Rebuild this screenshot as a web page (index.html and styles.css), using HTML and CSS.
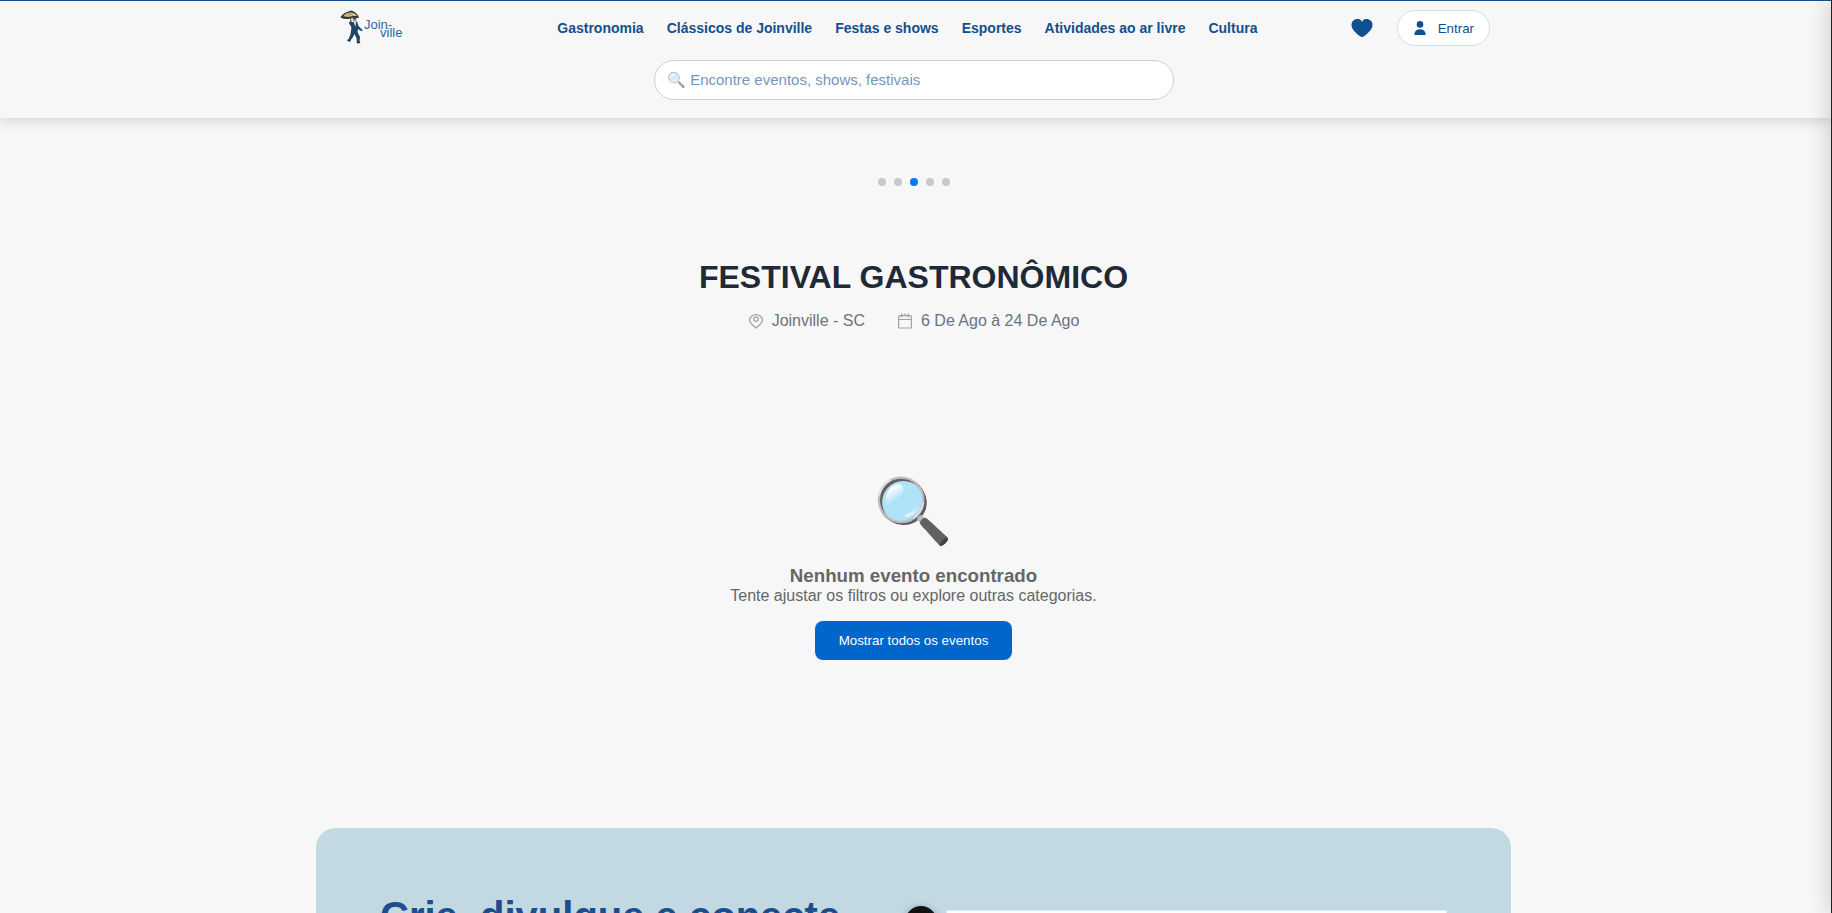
FILE: index.html
```html
<!DOCTYPE html>
<html lang="pt-BR">
<head>
<meta charset="utf-8">
<meta name="viewport" content="width=device-width, initial-scale=1">
<title>Joinville</title>
<link rel="stylesheet" href="styles.css">
</head>
<body>
<header class="header">
  <div class="header-row">
    <a class="logo" href="#" aria-label="Joinville">
      <svg class="logo-art" viewBox="0 0 66 36" aria-hidden="true">
        <path d="M2.500 7.500Q4 4 9 2L13 .5L16 1.800Q20 4 21 8L16 7.500 10 9Q5 9 2.500 7.500Z" fill="#26313a"/>
        <path d="M5 6.300Q8 3 12 2.300Q17 3 19 6L15 6 11 7Z" fill="#e5c783"/>
        <path d="M12 2.500L11 7M12 2.500L15 6M12 2.500L7.500 6.500" stroke="#7d6a45" stroke-width=".6"/>
        <path d="M12.500 7.500L14 18" stroke="#26313a" stroke-width=".9"/>
        <circle cx="16.500" cy="9.500" r="1.900" fill="#b98d6c"/>
        <path d="M14.500 9Q16.500 5.500 19 8.500Z" fill="#26313a"/>
        <path d="M11.500 11.500L15 12 19 11.500 20.500 16 24.500 20 24 21.500 20 19 19.500 22 22 27 21.500 32.500 19 32.500 18.500 28 16.500 24 15 27 12.500 30.500 10.500 29.500 12.500 24 13.500 17 11 13.500Z" fill="#1d4666"/>
        <path d="M15.500 11.800L18 11.800 17.500 17Z" fill="#eceae2"/>
        <path d="M10 29L12.800 30.500 12 32 9 30.500ZM18.800 31.500L21.500 31.500 22.500 33 19 33.500Z" fill="#262b30"/>
        <text class="logo-text" x="26" y="19">Join-</text>
        <text class="logo-text" x="42" y="27">ville</text>
      </svg>
    </a>
    <nav class="nav">
      <a href="#">Gastronomia</a>
      <a href="#">Clássicos de Joinville</a>
      <a href="#">Festas e shows</a>
      <a href="#">Esportes</a>
      <a href="#">Atividades ao ar livre</a>
      <a href="#">Cultura</a>
    </nav>
    <div class="actions">
      <button class="favorites" type="button" aria-label="Favoritos">
        <svg width="22" height="20" viewBox="0 0 22 20" aria-hidden="true"><path d="M11 4C10 1.500 8.500 1 6.500 1C3 1 .5 3.500 .5 7C.5 11 4 14.500 9 18.300Q11 19.700 13 18.300C18 14.500 21.500 11 21.500 7C21.500 3.500 19 1 15.500 1C13.500 1 12 1.500 11 4Z" fill="#11508f"/></svg>
      </button>
      <button class="login" type="button">
        <svg width="12" height="14" viewBox="0 0 12 14" aria-hidden="true"><circle cx="6" cy="3.400" r="3.300" fill="#11508f"/><path d="M.5 14V12.500Q1.500 8.300 6 8.300T11.500 12.500V14Z" fill="#11508f"/></svg>
        Entrar
      </button>
    </div>
  </div>
  <input class="search" type="search" aria-label="Buscar eventos" placeholder="🔍 Encontre eventos, shows, festivais">
</header>
<main class="main">
  <div class="dots"><span class="dot"></span><span class="dot"></span><span class="dot dot-active"></span><span class="dot"></span><span class="dot"></span></div>
  <section class="featured">
    <h1>FESTIVAL GASTRONÔMICO</h1>
    <div class="meta">
      <span class="meta-item">
        <svg width="16" height="16" viewBox="0 0 16 16" fill="none" stroke="#9ca3af" stroke-width="1.300" aria-hidden="true"><path d="M8 15C6.500 13.500 1.700 11 1.700 7.300A6.300 5.600 0 0 1 14.300 7.300C14.300 11 9.500 13.500 8 15Z"/><circle cx="8" cy="6" r="2.200"/></svg>
        Joinville - SC
      </span>
      <span class="meta-item">
        <svg width="16" height="16" viewBox="0 0 16 16" fill="none" stroke="#9ca3af" stroke-width="1.200" aria-hidden="true"><rect x="1.600" y="2.600" width="12.800" height="12.400" rx="1"/><path d="M1.600 6.500H14.400M4.800 .5V4.500M8 .5V2.500M11.200 .5V4.500"/></svg>
        6 De Ago à 24 De Ago
      </span>
    </div>
  </section>
  <section class="empty">
    <div class="empty-icon">🔍</div>
    <h3>Nenhum evento encontrado</h3>
    <p>Tente ajustar os filtros ou explore outras categorias.</p>
    <button class="show-all" type="button">Mostrar todos os eventos</button>
  </section>
  <section class="promo">
    <h2>Crie, divulgue e conecte</h2>
    <div class="carousel">
      <button class="carousel-prev" type="button" aria-label="Anterior"></button>
      <div class="carousel-slide"></div>
    </div>
  </section>
</main>
<aside class="drawer" aria-hidden="true"></aside>
</body>
</html>
```
FILE: styles.css
```css
* { box-sizing: border-box; margin: 0; }
body {
  height: 100vh;
  overflow: hidden;
  display: flex;
  flex-direction: column;
  background: #f7f7f7;
  font-family: "Liberation Sans", Arial, sans-serif;
  font-size: 16px;
}
button, input { font-family: inherit; }
.header {
  flex: none;
  display: flex;
  flex-direction: column;
  align-items: center;
  padding: 9px 4px 18px 0;
  border-top: 1px solid #11508f;
  background: #f7f7f7;
  box-shadow: 0 4px 12px rgba(0, 0, 0, 0.13);
}
.header-row {
  width: 100%;
  max-width: 1200px;
  padding: 0 24px;
  display: flex;
  align-items: center;
  justify-content: space-between;
}
.logo { width: 134px; height: 36px; }
.logo-art { display: block; width: 66px; height: 36px; }
.logo-text { font-size: 13px; fill: #2f68a5; }
.nav { display: flex; gap: 23px; }
.nav a {
  color: #11508f;
  font-size: 14px;
  font-weight: bold;
  text-decoration: none;
}
.actions { display: flex; align-items: center; gap: 16px; }
.favorites { display: flex; padding: 8px; border: 0; background: none; }
.login {
  display: flex;
  align-items: center;
  gap: 12px;
  height: 36px;
  padding: 0 15px 0 16px;
  border: 1px solid #d3dfeb;
  border-radius: 18px;
  background: #fff;
  color: #11508f;
}
.search {
  width: 100%;
  max-width: 520px;
  height: 40px;
  margin-top: 14px;
  padding: 0 12px 2px;
  border: 1px solid #c3d3e3;
  border-radius: 20px;
  background: #fff;
  color: #11508f;
  font-size: 15px;
  appearance: none;
}
.search::placeholder { color: #11508f; opacity: 0.6; }
.main {
  flex: 1;
  min-height: 0;
  display: flex;
  flex-direction: column;
  align-items: center;
  padding: 60px 5px 0 0;
  overflow: hidden;
}
.main > * { flex: none; }
.header { position: relative; }
.dots { display: flex; gap: 8px; }
.dot { width: 8px; height: 8px; border-radius: 50%; background: #c8c8c8; }
.dot-active { background: #007bff; }
.featured { margin-top: 72px; text-align: center; }
.featured h1 { color: #1f2937; font-size: 32px; line-height: 38px; }
.meta {
  display: flex;
  justify-content: center;
  gap: 32px;
  margin-top: 15px;
  color: #6b7280;
  line-height: 20px;
}
.meta-item { display: flex; align-items: center; gap: 8px; }
.empty {
  display: flex;
  flex-direction: column;
  align-items: center;
  margin-top: 143px;
  color: #666;
}
.empty-icon { font-size: 64px; line-height: 75px; }
.empty h3 { margin-top: 16px; line-height: 22px; }
.empty p { line-height: 18px; }
.show-all {
  margin-top: 16px;
  padding: 12px 24px;
  border: 0;
  border-radius: 8px;
  background: #06c;
  color: #fff;
}
.promo {
  display: flex;
  justify-content: space-between;
  align-items: flex-start;
  width: 100%;
  max-width: 1195px;
  margin-top: 168px;
  padding: 64px;
  border-radius: 20px;
  background: #c2d8e2;
}
.promo h2 { color: #1b4d8f; font-size: 40px; line-height: 48px; }
.carousel { display: flex; align-items: flex-start; gap: 9px; padding-top: 14px; }
.carousel-prev {
  width: 32px;
  height: 32px;
  padding: 0;
  border: 0;
  border-radius: 50%;
  background: #111;
  box-shadow: 0 2px 8px rgba(0, 0, 0, 0.3);
}
.carousel-slide {
  width: 501px;
  height: 240px;
  margin-top: 4px;
  border: 1px solid #dfeaf0;
  background: #fff;
}
.drawer {
  position: fixed;
  top: 0;
  right: -319px;
  bottom: 0;
  width: 320px;
  background: #222;
  box-shadow: -4px 0 20px rgba(0, 0, 0, 0.15);
}
```
